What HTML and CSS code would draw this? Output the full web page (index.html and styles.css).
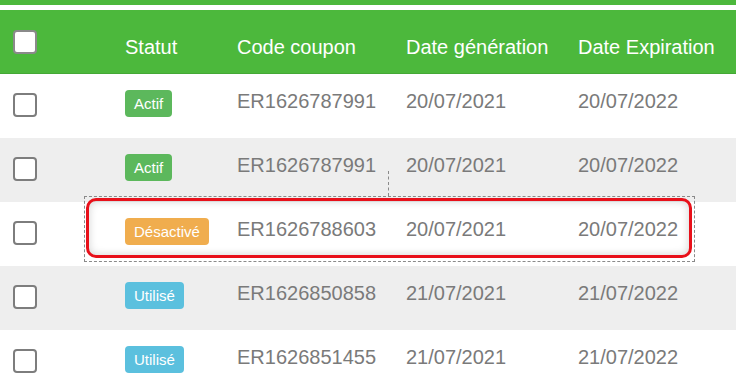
FILE: index.html
```html
<!DOCTYPE html>
<html lang="fr">
<head>
<meta charset="utf-8">
<title>Coupons</title>
<link rel="stylesheet" href="styles.css">
</head>
<body>
<div class="page">
  <div class="topbar"></div>
  <div class="table">
    <div class="row head">
      <div class="cell c-check"><span class="box box-head"></span></div>
      <div class="cell">Statut</div>
      <div class="cell">Code coupon</div>
      <div class="cell">Date génération</div>
      <div class="cell">Date Expiration</div>
    </div>
    <div class="row">
      <div class="cell c-check"><span class="box"></span></div>
      <div class="cell c-badge"><span class="badge green">Actif</span></div>
      <div class="cell">ER1626787991</div>
      <div class="cell">20/07/2021</div>
      <div class="cell">20/07/2022</div>
    </div>
    <div class="row alt">
      <div class="cell c-check"><span class="box"></span></div>
      <div class="cell c-badge"><span class="badge green">Actif</span></div>
      <div class="cell">ER1626787991</div>
      <div class="cell">20/07/2021</div>
      <div class="cell">20/07/2022</div>
    </div>
    <div class="row">
      <div class="cell c-check"><span class="box"></span></div>
      <div class="cell c-badge"><span class="badge orange">Désactivé</span></div>
      <div class="cell">ER1626788603</div>
      <div class="cell">20/07/2021</div>
      <div class="cell">20/07/2022</div>
    </div>
    <div class="row alt">
      <div class="cell c-check"><span class="box"></span></div>
      <div class="cell c-badge"><span class="badge blue">Utilisé</span></div>
      <div class="cell">ER1626850858</div>
      <div class="cell">21/07/2021</div>
      <div class="cell">21/07/2022</div>
    </div>
    <div class="row">
      <div class="cell c-check"><span class="box"></span></div>
      <div class="cell c-badge"><span class="badge blue">Utilisé</span></div>
      <div class="cell">ER1626851455</div>
      <div class="cell">21/07/2021</div>
      <div class="cell">21/07/2022</div>
    </div>
  </div>
  <div class="sel-line"></div>
  <div class="sel-dash"></div>
  <div class="highlight"></div>
</div>
</body>
</html>
```

FILE: styles.css
```css
html, body {
  margin: 0;
  padding: 0;
  background: #ffffff;
}
body {
  font-family: "Liberation Sans", Arial, sans-serif;
  width: 736px;
  height: 377px;
  overflow: hidden;
}
.page {
  position: relative;
}
.topbar {
  height: 5px;
  background: #4cb83c;
  margin-bottom: 5px;
}
.table {
  display: flex;
  flex-direction: column;
}
.row {
  display: grid;
  grid-template-columns: 125px 112px 169px 172px 1fr;
  height: 64px;
  font-size: 20px;
  line-height: 23px;
  color: #7a7a7a;
  background: #ffffff;
}
.row.alt {
  background: #eeeeee;
}
.row.head {
  background: #4cb83c;
  color: #ffffff;
  border-bottom: 1px solid #44a836;
  height: 63px;
}
.cell {
  padding-top: 16px;
  white-space: nowrap;
}
.head .cell {
  padding-top: 26px;
}
.c-check {
  padding-top: 19px;
  padding-left: 13px;
}
.head .c-check {
  padding-top: 20px;
}
.box {
  display: block;
  width: 20px;
  height: 20px;
  border: 2px solid #7d7d7d;
  border-radius: 4px;
  background: #ffffff;
}
.box-head {
  border-color: #8a8a8a;
}
.c-badge {
  padding-top: 16px;
}
.badge {
  display: inline-block;
  height: 27px;
  line-height: 27px;
  padding: 0 9px;
  font-size: 15px;
  color: #ffffff;
  border-radius: 4px;
}
.green { background: #5cb85c; }
.orange { background: #f0ad4e; }
.blue { background: #5bc0de; }

.sel-line {
  position: absolute;
  left: 388px;
  top: 171px;
  height: 25px;
  border-left: 1px dashed #8a8a8a;
}
.sel-dash {
  position: absolute;
  left: 84px;
  top: 196px;
  width: 609px;
  height: 64px;
  border: 1px dashed #8a8a8a;
}
.highlight {
  position: absolute;
  left: 86px;
  top: 198px;
  width: 600px;
  height: 54px;
  border: 3px solid #e8101a;
  border-radius: 10px;
  box-shadow: inset 0 0 8px rgba(0, 0, 0, 0.18);
}
```
